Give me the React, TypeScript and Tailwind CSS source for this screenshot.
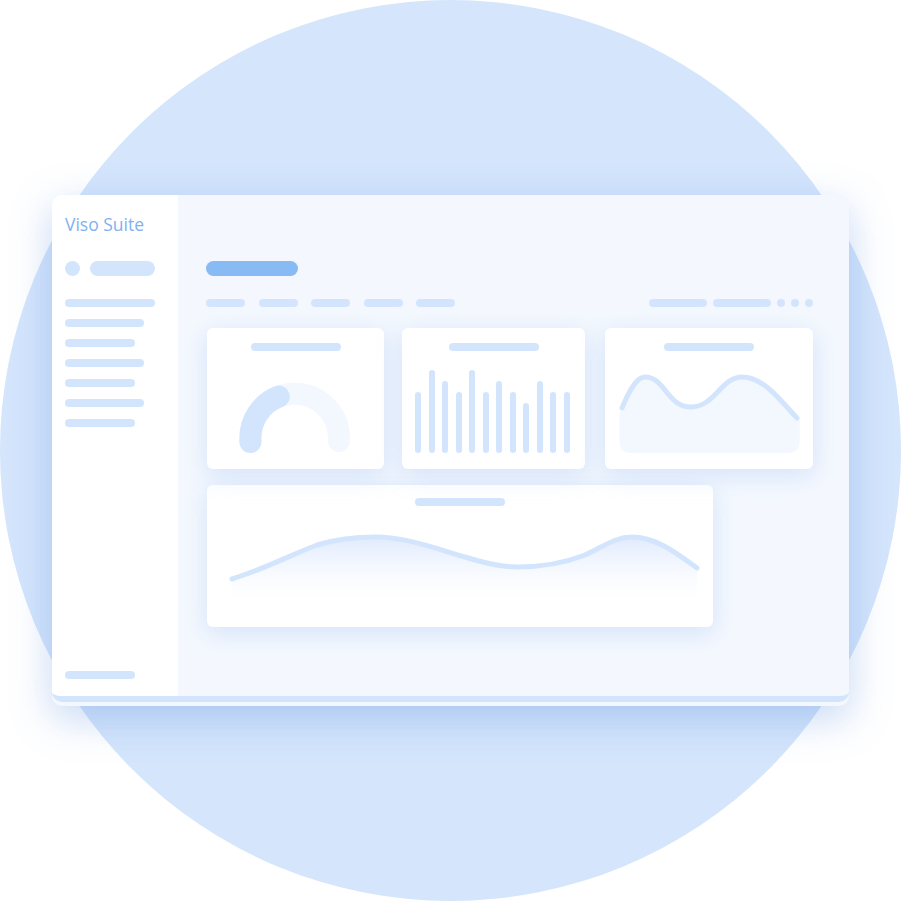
const bar = 'rounded-full bg-[#d3e5fd]';

const sideLines = [90, 79, 70, 79, 70, 79, 70];
const navLines = [39, 39, 39, 39, 39];
const barHeights = [61, 83, 72, 61, 83, 61, 72, 61, 50, 72, 61, 61];

function Gauge() {
  // centre (87.7,110), radius 44.3, stroke 22
  return (
    <svg width="177" height="118" viewBox="0 23 177 118" className="block">
      <path d="M43.4 114 L43.4 110 A44.3 44.3 0 0 1 132 110 L132 113" fill="none" stroke="#f3f7fe" strokeWidth="22" strokeLinecap="round" />
      <path d="M43.4 114 L43.4 110 A44.3 44.3 0 0 1 71.8 68.6" fill="none" stroke="#d3e5fd" strokeWidth="22" strokeLinecap="round" />
    </svg>
  );
}

function SmallWave() {
  const line = 'M17 80 C22 68 30 49 40 49 C60 49 62 79 86 79 C110 79 116 49 137 49 C160 49 178 76 192 90';
  return (
    <svg width="208" height="118" viewBox="0 23 208 118" className="block">
      <path d={`${line} L194.7 92 L194.7 113 Q194.7 125 182.7 125 L26.5 125 Q14.5 125 14.5 113 L14.5 86 Z`} fill="#f3f7fe" />
      <path d={line} fill="none" stroke="#d3e5fd" strokeWidth="5" strokeLinecap="round" />
    </svg>
  );
}

function WideWave() {
  const line =
    'M25 94 C60 83 88 68 110 60 C130 54 150 52 168 52 C200 52 230 64 258 72 C280 79 295 82 310 82 C335 82 360 77 378 70 C396 62 408 52 425 52 C450 52 472 70 490 83';
  return (
    <svg width="506" height="121" viewBox="0 21 506 121" className="block">
      <defs>
        <linearGradient id="wideFill" x1="0" y1="52" x2="0" y2="124" gradientUnits="userSpaceOnUse">
          <stop offset="0" stopColor="#dce8fd" stopOpacity="0.9" />
          <stop offset="1" stopColor="#ffffff" stopOpacity="0" />
        </linearGradient>
      </defs>
      <path d={`${line} L490 124 L25 124 Z`} fill="url(#wideFill)" />
      <path d={line} fill="none" stroke="#d3e5fd" strokeWidth="5" strokeLinecap="round" />
    </svg>
  );
}

const card = 'bg-white rounded-[6px] shadow-[0_6px_24px_rgba(130,172,238,0.28)] flex flex-col';

export default function App() {
  return (
    <div className="w-[901px] h-[901px] bg-white overflow-hidden font-['Open_Sans',sans-serif]">
      <div className="w-[901px] h-[901px] rounded-full bg-[#d4e5fc] pt-[195px] pl-[52px]">
        <div className="w-[797px] rounded-[10px] bg-[#f4f8fe] pb-[4px] shadow-[0_12px_40px_rgba(86,140,220,0.35)]">
          <div className="flex h-[507px] rounded-[10px] overflow-hidden border-b-[6px] border-[#d3e5fd]">
            {/* sidebar */}
            <aside className="w-[126px] bg-white flex flex-col pl-[13px] pt-[19px] pb-[17px]">
              <div className="text-[17.5px] leading-[20px] font-medium text-[#7fb2f1]">Viso Suite</div>
              <div className="mt-[27px] flex items-center gap-[10px]">
                <div className={`${bar} w-[15px] h-[15px]`} />
                <div className={`${bar} w-[65px] h-[15px]`} />
              </div>
              <div className="mt-[23px] flex flex-col gap-[12px]">
                {sideLines.map((w, i) => (
                  <div key={i} className={`${bar} h-[8px]`} style={{ width: w }} />
                ))}
              </div>
              <div className={`${bar} mt-auto w-[70px] h-[8px]`} />
            </aside>

            {/* main */}
            <main className="flex-1 pl-[28px] pr-[36px] pt-[66px]">
              <div className="w-[92px] h-[15px] rounded-full bg-[#88baf4]" />
              <div className="mt-[23px] flex justify-between">
                <div className="flex gap-[13.5px]">
                  {navLines.map((w, i) => (
                    <div key={i} className={`${bar} h-[8px]`} style={{ width: w }} />
                  ))}
                </div>
                <div className="flex gap-[6px]">
                  <div className={`${bar} w-[58px] h-[8px]`} />
                  <div className={`${bar} w-[58px] h-[8px]`} />
                  <div className={`${bar} w-[8px] h-[8px]`} />
                  <div className={`${bar} w-[8px] h-[8px]`} />
                  <div className={`${bar} w-[8px] h-[8px]`} />
                </div>
              </div>

              <div className="mt-[21px] ml-[1px] flex gap-[18px]">
                <div className={`${card} w-[177px] h-[141px]`}>
                  <div className={`${bar} mt-[15px] mx-auto w-[90px] h-[8px]`} />
                  <Gauge />
                </div>
                <div className={`${card} w-[183px] h-[141px]`}>
                  <div className={`${bar} mt-[15px] mx-auto w-[90px] h-[8px]`} />
                  <div className="flex-1 flex items-end gap-[7.5px] pl-[13px] pb-[16px]">
                    {barHeights.map((h, i) => (
                      <div key={i} className={`${bar} w-[6px]`} style={{ height: h }} />
                    ))}
                  </div>
                </div>
                <div className={`${card} ml-[2px] w-[208px] h-[141px]`}>
                  <div className={`${bar} mt-[15px] mx-auto w-[90px] h-[8px]`} />
                  <SmallWave />
                </div>
              </div>

              <div className={`${card} mt-[16px] ml-[1px] w-[506px] h-[142px]`}>
                <div className={`${bar} mt-[13px] mx-auto w-[90px] h-[8px]`} />
                <WideWave />
              </div>
            </main>
          </div>
        </div>
      </div>
    </div>
  );
}
